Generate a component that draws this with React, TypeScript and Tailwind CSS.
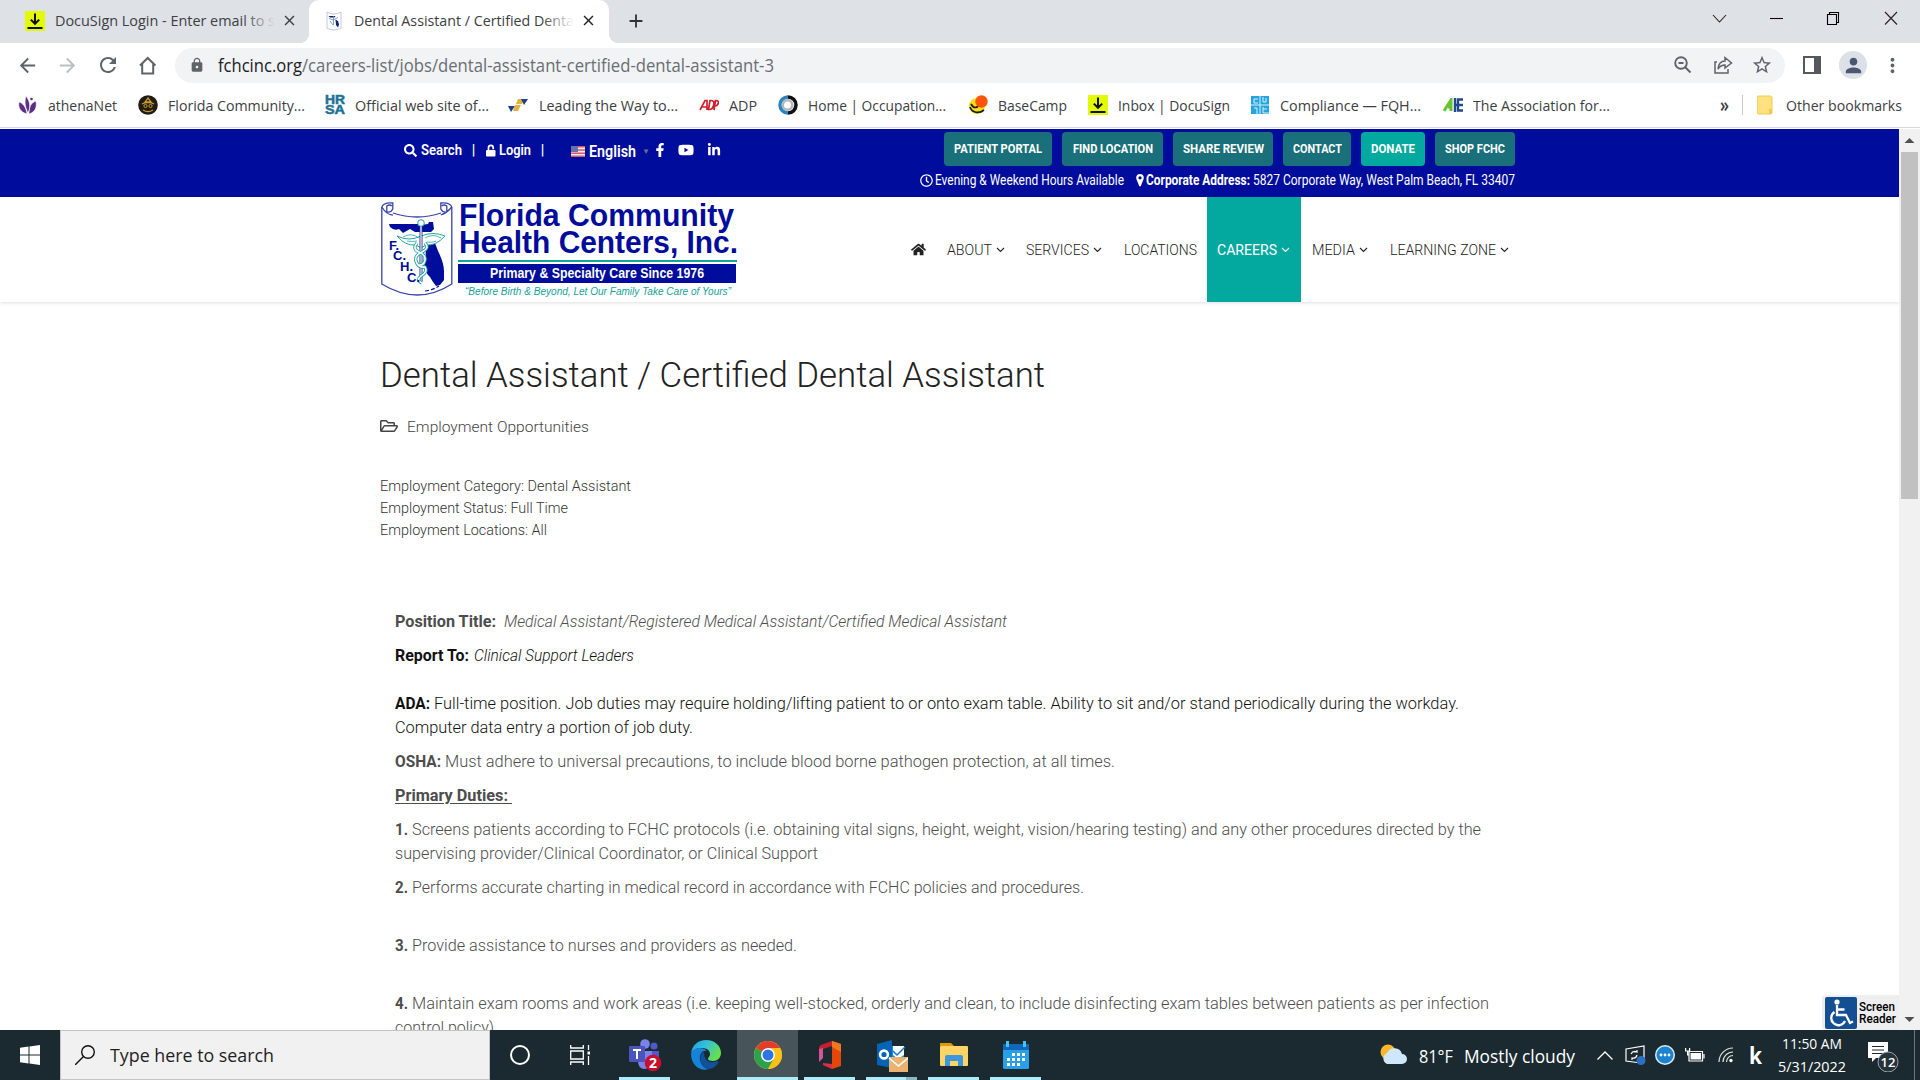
import React, { useLayoutEffect, useRef } from "react";
import {
  FaSearch,
  FaFacebookF,
  FaYoutube,
  FaLinkedinIn,
  FaHome,
  FaRegClock,
  FaRegFolderOpen,
} from "react-icons/fa";
import {
  MdArrowBack,
  MdArrowForward,
  MdRefresh,
  MdLock,
  MdStarBorder,
  MdClose,
  MdAdd,
  MdMoreVert,
  MdPerson,
} from "react-icons/md";

/* A single line of text condensed or widened to fill the width of its box. */
function T({ c = "", children }: { c?: string; children: React.ReactNode }) {
  const box = useRef<HTMLSpanElement>(null);
  const text = useRef<HTMLSpanElement>(null);
  useLayoutEffect(() => {
    const b = box.current;
    const t = text.current;
    if (b && t && t.offsetWidth > 0) {
      t.style.transform = `scaleX(${b.clientWidth / t.getBoundingClientRect().width})`;
    }
  }, []);
  return (
    <span ref={box} className={`block shrink-0 whitespace-pre ${c}`}>
      <span ref={text} className="inline-block origin-left">
        {children}
      </span>
    </span>
  );
}

function DocuSignIcon() {
  return (
    <svg viewBox="0 0 20 20" className="size-5 shrink-0">
      <rect width="20" height="20" fill="#e2fb02" />
      <path d="M10 2.500v10M5.800 8.600l4.200 4.200 4.200-4.200M2.500 17h15" stroke="#101010" strokeWidth="2" fill="none" />
    </svg>
  );
}

function ShieldIcon() {
  return (
    <svg viewBox="0 0 16 20" className="h-5 w-4 shrink-0">
      <path d="M1 1v16.500q7 3 14 0V1q-7 4-14 0z" fill="#fff" stroke="#c3c6ea" strokeWidth="1" />
      <path d="M2.500 5h7l-1 1.500H4z" fill="#141f72" />
      <path d="M9.500 8.500q3 1 3.500 5l-1 3-2-2.500z" fill="#141f72" />
      <path d="M3 7.500l4 1.500 5-2.500M7.500 5v9M4 10l3 4" stroke="#5f8fb8" strokeWidth=".8" fill="none" />
    </svg>
  );
}

function TabStrip() {
  return (
    <div className="flex h-[43px] items-stretch bg-[#dee1e6] text-[15px] text-[#3c4043]">
      <div className="flex w-[309px] items-center pb-[2px] pl-[25px]">
        <DocuSignIcon />
        <div className="relative ml-[10px]">
          <T c="w-[220px]">DocuSign Login - Enter email to s</T>
          <div className="absolute inset-y-0 right-0 w-8 bg-linear-to-r from-transparent to-[#dee1e6]" />
        </div>
        <MdClose className="ml-[6px] size-[17px] text-[#3c4043]" />
      </div>
      <div className="relative flex w-[300px] items-center rounded-t-[10px] bg-white pb-[2px] pl-[17px]">
        <div className="absolute bottom-0 -left-[10px] size-[10px] bg-[radial-gradient(circle_at_0_0,#dee1e6_10px,white_10.5px)]" />
        <div className="absolute -right-[10px] bottom-0 size-[10px] bg-[radial-gradient(circle_at_100%_0,#dee1e6_10px,white_10.5px)]" />
        <ShieldIcon />
        <div className="relative ml-[12px]">
          <T c="w-[220px]">Dental Assistant / Certified Denta</T>
          <div className="absolute inset-y-0 right-0 w-8 bg-linear-to-r from-transparent to-white" />
        </div>
        <MdClose className="ml-[6px] size-[17px] text-[#202124]" />
      </div>
      <div className="flex flex-1 items-center pb-[1px] pl-[16px]">
        <MdAdd className="size-[22px] text-[#303438]" />
      </div>
      <svg viewBox="0 0 220 43" className="h-[43px] w-[220px]" fill="none" stroke="#222" strokeWidth="1.1">
        <path d="M13 15l6.500 7 6.500-7" />
        <path d="M70 18.500h13" stroke="#000" />
        <path d="M127.500 14.500h9v10h-9zM129.500 14.500v-2h9v10h-2" stroke="#000" />
        <path d="M185 12l12 12.500M197 12l-12 12.500" />
      </svg>
    </div>
  );
}

function Toolbar() {
  return (
    <div className="flex h-[44px] items-center bg-white text-[#5f6368]">
      <div className="ml-[16px] flex w-[159px] items-center gap-[17px]">
        <MdArrowBack className="size-[23px]" />
        <MdArrowForward className="size-[23px] text-[#bdbfc2]" />
        <MdRefresh className="size-[24px]" />
        <svg viewBox="0 0 23 23" className="size-[23px]" fill="none" stroke="#5f6368" strokeWidth="2">
          <path d="M3 11.500L10.700 4l7.700 7.500M5.200 10v9.500h11V10" />
        </svg>
      </div>
      <div className="flex h-[35px] w-[1610px] items-center rounded-full bg-[#f1f3f4] text-[18px]">
        <MdLock className="ml-[14px] size-[16px]" />
        <T c="ml-[13px] w-[84px] text-[#202124]">fchcinc.org</T>
        <T c="w-[472px] text-[#6a6e73]">/careers-list/jobs/dental-assistant-certified-dental-assistant-3</T>
        <div className="flex-1" />
        <svg viewBox="0 0 20 20" className="mr-[20px] size-5" fill="none" stroke="#5f6368" strokeWidth="1.900">
          <circle cx="8" cy="8" r="5.800" />
          <path d="M12 12l5.500 5.500M5.500 8h5" />
        </svg>
        <svg viewBox="0 0 20 20" className="mr-[18px] size-5" fill="none" stroke="#5f6368" strokeWidth="1.500">
          <path d="M4 7H2v11h13v-4" />
          <path d="M5 14c.500-5 3-8 7-8V2.500L18.500 8 12 13V10c-3 0-5 1-7 4z" />
        </svg>
        <MdStarBorder className="mr-[12px] size-[22px]" />
      </div>
      <svg viewBox="0 0 18 18" className="ml-[18px] size-[18px]">
        <rect x="1" y="1" width="16" height="16" fill="#fff" stroke="#55595e" strokeWidth="2" />
        <rect x="11" y="1" width="6" height="16" fill="#55595e" />
      </svg>
      <div className="ml-[18px] flex size-[28px] items-center justify-center rounded-full bg-[#dce0e7] text-[#4b5671]">
        <MdPerson className="size-[23px]" />
      </div>
      <MdMoreVert className="ml-[14px] size-[23px]" />
    </div>
  );
}

function Bookmarks() {
  return (
    <div className="flex h-[41px] items-center border-b border-[#d5d7db] bg-white pb-[4px] text-[15px] text-[#3c4043]">
      <svg viewBox="0 0 20 20" className="ml-[18px] size-5" fill="#5c2d82">
        <path d="M9 19C2 17 0 12 1 7c4 1 7 5 8 12zM10 18C6 10 7 5 8 1c4 5 5 11 2 17zM11 19c0-8 2-11 7-13 1 7-1 11-7 13z" stroke="#fff" strokeWidth=".6" />
        <circle cx="13.500" cy="4" r="1.300" />
      </svg>
      <T c="ml-[10px] w-[69px]">athenaNet</T>
      <svg viewBox="0 0 20 20" className="ml-[21px] size-5">
        <circle cx="10" cy="10" r="9.800" fill="#201c15" />
        <path d="M10 3l3 4H7zM4 9c3-2 9-2 12 0M5 15c3 2 7 2 10 0" stroke="#c79b2d" fill="none" strokeWidth="1.300" />
        <circle cx="7.500" cy="11" r="1.600" fill="none" stroke="#c79b2d" />
        <circle cx="12.500" cy="11" r="1.600" fill="none" stroke="#c79b2d" />
      </svg>
      <T c="ml-[10px] w-[137px]">Florida Community...</T>
      <div className="ml-[20px] flex h-5 w-5 flex-col font-['Liberation_Sans'] text-[12px] leading-[10px] font-bold text-[#1c7296]">
        <T c="h-[10px] w-[20px] [-webkit-text-stroke:0.5px_#1c7296]">HR</T>
        <T c="h-[10px] w-[20px] [-webkit-text-stroke:0.5px_#1c7296]">SA</T>
      </div>
      <T c="ml-[10px] w-[134px]">Official web site of...</T>
      <svg viewBox="0 0 20 16" className="ml-[19px] h-4 w-5">
        <path d="M10 2h7l-3 5H8z" fill="#e2b33e" />
        <path d="M0 9h7l-4 6z" fill="#1d3f94" />
        <path d="M7 8h6l-3 6H5z" fill="#e2b33e" />
        <path d="M13 2h7l-4 6z" fill="#1d3f94" />
      </svg>
      <T c="ml-[11px] w-[139px]">Leading the Way to...</T>
      <svg viewBox="0 0 20 12" className="ml-[21px] h-3 w-5" fill="none" stroke="#d0202c" strokeWidth="1.700">
        <path d="M1 11L6 1.500h2V11M3.500 8H8M9.500 10.500l1.500-9h1q4 0 2.500 5-1 4-4 4zM15 11l1.500-9.500h.5q3.500 0 2 3.500-1 2-3 2" />
      </svg>
      <T c="ml-[10px] w-[28px]">ADP</T>
      <svg viewBox="0 0 20 20" className="ml-[21px] size-5" fill="none">
        <path d="M10 2a8 8 0 0 1 0 16" stroke="#111" strokeWidth="3.500" />
        <path d="M10 18a8 8 0 0 1 0-16" stroke="#2b84c2" strokeWidth="3.500" />
        <circle cx="9.500" cy="10" r="4.800" stroke="#b4b8bb" strokeWidth="2.600" />
      </svg>
      <T c="ml-[10px] w-[138px]">Home | Occupation...</T>
      <svg viewBox="0 0 20 20" className="ml-[22px] size-5" fill="none">
        <circle cx="9" cy="11" r="8" fill="#f8dc1b" />
        <path d="M2 12c2 6 9 7 14 3M3 9c3 5 6 4 8 1" stroke="#1b1b1b" strokeWidth="1.700" />
        <circle cx="13.500" cy="6.500" r="6.200" fill="#fb5607" />
      </svg>
      <T c="ml-[10px] w-[69px]">BaseCamp</T>
      <div className="ml-[21px]">
        <DocuSignIcon />
      </div>
      <T c="ml-[10px] w-[112px]">Inbox | DocuSign</T>
      <svg viewBox="0 0 18 18" className="ml-[21px] size-[18px]">
        <rect width="18" height="18" fill="#25a5dc" />
        <path d="M9 0v18M0 9h18M3 3h4M3 3v4h4M12 1v5h3V2M3 12h3v6M12 11v6h6M12 13h4" stroke="#d8f1fb" fill="none" />
      </svg>
      <T c="ml-[11px] w-[141px]">Compliance — FQH...</T>
      <svg viewBox="0 0 20 14" className="ml-[22px] h-[14px] w-5" fill="none" strokeWidth="3">
        <path d="M1 13L8 2v11M5 9h4" stroke="#68c52e" />
        <path d="M12 0v14M12 7h8M20 1.500h-5V12.500h5" stroke="#214a8c" strokeWidth="2.400" />
      </svg>
      <T c="ml-[10px] w-[137px]">The Association for...</T>
      <T c="ml-[110px] w-[9px] text-[19px] font-semibold">»</T>
      <div className="ml-[13px] h-5 w-px bg-[#c9cbce]" />
      <svg viewBox="0 0 16 20" className="ml-[14px] h-5 w-4">
        <rect y="1" width="15" height="18" rx="1.500" fill="#ffe17f" stroke="#f0cb52" />
        <path d="M12 14h3v5h-3z" fill="#f6c944" />
      </svg>
      <T c="ml-[13px] w-[116px]">Other bookmarks</T>
    </div>
  );
}

function TopBar() {
  return (
    <div className="flex h-[68px] justify-between bg-[#000c9c] pr-[384px] pl-[404px] font-[Roboto] text-white">
      <div className="flex h-[42px] items-center text-[14px] font-semibold">
        <FaSearch className="size-[13px]" />
        <T c="ml-[4px] w-[41px]">Search</T>
        <span className="ml-[9px] w-[5px] text-center">|</span>
        <svg viewBox="0 0 11 13" className="ml-[10px] h-[13px] w-[11px]" fill="none">
          <rect y="6" width="9.500" height="6.500" rx="1" fill="#fff" />
          <path d="M2.500 7V3.700a2.300 2.300 0 0 1 4.700 0v1.500" stroke="#fff" strokeWidth="1.700" />
        </svg>
        <T c="ml-[2px] w-[32px]">Login</T>
        <span className="ml-[9px] w-[5px] text-center">|</span>
        <svg viewBox="0 0 14 11" className="mt-[3px] ml-[26px] h-[11px] w-[14px]">
          <rect width="14" height="11" fill="#f5e9ea" />
          <path d="M0 .8h14M0 4h14M0 7.200h14M0 10.300h14" stroke="#d05a66" strokeWidth="1.500" />
          <rect width="7" height="6" fill="#6671ae" />
        </svg>
        <T c="mt-[4px] ml-[4px] w-[47px] text-[16px]">English</T>
        <span className="mt-[3px] ml-[6px] w-[6px] text-[8px] text-[#66718f]">▼</span>
        <FaFacebookF className="ml-[5px] size-[14px]" />
        <FaYoutube className="ml-[11px] size-[16px]" />
        <FaLinkedinIn className="mb-[1px] ml-[13px] size-[14px]" />
      </div>
      <div className="flex flex-col items-end">
        <div className="mt-[3px] flex gap-[10px] text-[12px] font-bold [&>div]:flex [&>div]:h-[34px] [&>div]:items-center [&>div]:justify-center [&>div]:rounded-[4px] [&>div]:bg-[#19707a]">
          <div className="w-[108px]"><T c="w-[88px]">PATIENT PORTAL</T></div>
          <div className="w-[101px]"><T c="w-[80px]">FIND LOCATION</T></div>
          <div className="w-[100px]"><T c="w-[81px]">SHARE REVIEW</T></div>
          <div className="w-[68px]"><T c="w-[49px]">CONTACT</T></div>
          <div className="w-[64px] bg-[#03a89e]!"><T c="w-[44px]">DONATE</T></div>
          <div className="w-[80px]"><T c="w-[60px]">SHOP FCHC</T></div>
        </div>
        <div className="mt-[3px] flex h-[22px] items-center text-[14px]">
          <FaRegClock className="size-[13px]" />
          <T c="ml-[2px] w-[189px]">Evening &amp; Weekend Hours Available</T>
          <svg viewBox="0 0 8 13" className="ml-[12px] h-[13px] w-[8px]">
            <path d="M4 0a3.800 3.800 0 0 1 3.800 3.800C7.800 6 6 8 4.800 12.300H3.200C2 8 .2 6 .2 3.800A3.800 3.800 0 0 1 4 0zM4 2.200a1.600 1.600 0 1 0 0 3.300 1.600 1.600 0 0 0 0-3.300z" fill="#fff" fillRule="evenodd" />
          </svg>
          <T c="ml-[2px] w-[104px] font-bold">Corporate Address:</T>
          <T c="ml-[3px] w-[262px]">5827 Corporate Way, West Palm Beach, FL 33407</T>
        </div>
      </div>
    </div>
  );
}

function Logo() {
  return (
    <div className="flex w-[360px] font-['Liberation_Sans']">
      <svg viewBox="0 0 72 96" className="mt-[4px] ml-[1px] h-[96px] w-[72px]" fill="none">
        <path d="M.8 6v77q36 22 70 0V6" stroke="#3844a8" strokeWidth="1.300" />
        <path d="M.8 6q2-5 11-4v6q-2 4-6 3V5q3-2 5 0M12 12q24 8 48 0M.8 6q5 8 11 8M70.800 6q-2-5-11-4v6q2 4 6 3V5q-3-2-5 0M70.800 6q-5 6-11 8" stroke="#3844a8" strokeWidth="1.300" />
        <path d="M8 23h29l2 1 8-1 1-2h4l1 7-3 3H34l-5-3-7 4-4-4q-5 2-9-2z" fill="#000c9c" />
        <path d="M46 44l8-2 3 8q6 12 6 20v9l-4 5-4 1q-4-5-6-9-5-5-6-10 1-6 2-10-1-6 1-12z" fill="#000c9c" />
        <path d="M16 35q12 6 24 0 12-5 24 0-9 10-19 9l-5 3-5-3Q24 45 16 35z" fill="#fff" stroke="#23a3a3" strokeWidth="1" />
        <path d="M22 36q8-5 16 1M44 37q8-5 16 0M26 40q6 1 10 0M46 41q6 1 9-1" stroke="#23a3a3" strokeWidth=".8" />
        <path d="M40 24v56" stroke="#263294" strokeWidth="3" />
        <path d="M40 24v56" stroke="#fff" strokeWidth="1.200" />
        <circle cx="40" cy="22" r="3.300" fill="#fff" stroke="#23a3a3" />
        <path d="M36 42q-5 6 2 9t6 8q-1 6-7 5M44 42q5 5-3 9t-6 9q2 7 9 6 3 5-4 9-5 4 1 7" stroke="#23a3a3" strokeWidth="3.400" />
        <path d="M36 42q-5 6 2 9t6 8q-1 6-7 5M44 42q5 5-3 9t-6 9q2 7 9 6 3 5-4 9-5 4 1 7" stroke="#fff" strokeWidth="1.600" />
        <path d="M44 90q8-1 14-5" stroke="#000c9c" strokeWidth="1.200" strokeDasharray="4 2" />
        <g fill="#000c9c" fontSize="13" fontWeight="bold" fontFamily="Liberation Sans">
          <text x="8" y="49">F.</text>
          <text x="12" y="59">C.</text>
          <text x="19" y="70">H.</text>
          <text x="26" y="81">C.</text>
        </g>
      </svg>
      <div className="ml-[5px] flex flex-col text-[#000c9c]">
        <T c="mt-[6px] ml-[1px] h-[26px] w-[275px] text-[31px] leading-[26px] font-bold">Florida Community</T>
        <T c="ml-[1px] h-[27px] w-[279px] text-[31px] leading-[27px] font-bold">Health Centers, Inc.</T>
        <div className="mt-[4px] h-[2px] w-[279px] bg-[#13a39b]" />
        <div className="mt-[2px] flex h-[19px] w-[278px] items-center justify-center bg-[#000c9c] text-[15.500px] font-bold text-white">
          <T c="w-[214px] leading-[18px] pb-px">Primary &amp; Specialty Care Since 1976</T>
        </div>
        <T c="mt-px ml-[7px] w-[266px] text-[10.500px] leading-[15px] text-[#13a39b] italic">“Before Birth &amp; Beyond, Let Our Family Take Care of Yours”</T>
      </div>
    </div>
  );
}

function Caret() {
  return (
    <svg viewBox="0 0 9 6" className="ml-[4px] h-[6px] w-[9px]" fill="none" stroke="currentColor" strokeWidth="1.100">
      <path d="M1 1l3.500 3.500L8 1" />
    </svg>
  );
}

function Header() {
  return (
    <div className="relative z-10 flex h-[105px] bg-white pl-[380px] font-[Roboto] shadow-[0_1px_4px_rgba(0,0,0,0.13)]">
      <Logo />
      <div className="ml-[171px] flex items-center text-[15px] font-light text-[#222] [&_span]:pt-px">
        <FaHome className="size-[15px] text-[#222]" />
        <T c="ml-[21px] w-[45px]">ABOUT</T>
        <Caret />
        <T c="ml-[21px] w-[63px]">SERVICES</T>
        <Caret />
        <T c="ml-[22px] w-[73px]">LOCATIONS</T>
        <div className="ml-[10px] flex h-full w-[94px] items-center bg-[#03a89e] pl-[10px] font-normal text-white">
          <T c="w-[60px]">CAREERS</T>
          <Caret />
        </div>
        <T c="ml-[11px] w-[43px]">MEDIA</T>
        <Caret />
        <T c="ml-[22px] w-[106px]">LEARNING ZONE</T>
        <Caret />
      </div>
    </div>
  );
}

function Article() {
  return (
    <div className="flex-1 overflow-hidden bg-white pl-[380px] font-[Roboto] font-light text-[#333]">
      <T c="mt-[50px] w-[665px] text-[35px] leading-[48px] text-[#222]">Dental Assistant / Certified Dental Assistant</T>
      <div className="mt-[16px] flex h-[22px] items-center text-[15px] text-[#444]">
        <FaRegFolderOpen className="mb-[2px] h-[16px] w-[18px]" />
        <T c="ml-[9px] w-[182px]">Employment Opportunities</T>
      </div>
      <div className="mt-[38px] text-[15px]">
        <T c="h-[21px] w-[251px] leading-[21px]">Employment Category: Dental Assistant</T>
        <T c="h-[22px] w-[188px] leading-[22px]">Employment Status: Full Time</T>
        <T c="h-[22px] w-[167px] leading-[22px]">Employment Locations: All</T>
      </div>
      <div className="mt-[69px] pl-[14.500px] text-[16px] leading-6 text-[#4d4d4d] [&>div]:flex">
        <div>
          <T c="w-[101px] font-bold">Position Title:</T>
          <T c="ml-[8px] w-[503px] italic">Medical Assistant/Registered Medical Assistant/Certified Medical Assistant</T>
        </div>
        <div className="mt-[10px] text-[#111]">
          <T c="w-[74px] font-bold">Report To:</T>
          <T c="ml-[5px] w-[160px] italic">Clinical Support Leaders</T>
        </div>
        <div className="mt-6 text-[#111]">
          <T c="w-[35px] font-bold">ADA:</T>
          <T c="ml-[4px] w-[1025px]">Full-time position. Job duties may require holding/lifting patient to or onto exam table. Ability to sit and/or stand periodically during the workday.</T>
        </div>
        <T c="w-[298px] text-[#111]">Computer data entry a portion of job duty.</T>
        <div className="mt-[10px]">
          <T c="w-[46px] font-bold">OSHA:</T>
          <T c="ml-[4px] w-[670px]">Must adhere to universal precautions, to include blood borne pathogen protection, at all times.</T>
        </div>
        <T c="mt-[10px] w-[117px] font-bold [&>span]:underline [&>span]:underline-offset-2">{"Primary Duties: "}</T>
        <div className="mt-[10px]">
          <T c="w-[13px] font-bold">1.</T>
          <T c="ml-[4px] w-[1069px]">Screens patients according to FCHC protocols (i.e. obtaining vital signs, height, weight, vision/hearing testing) and any other procedures directed by the</T>
        </div>
        <T c="w-[423px]">supervising provider/Clinical Coordinator, or Clinical Support</T>
        <div className="mt-[10px]">
          <T c="w-[13px] font-bold">2.</T>
          <T c="ml-[4px] w-[672px]">Performs accurate charting in medical record in accordance with FCHC policies and procedures.</T>
        </div>
        <div className="mt-[34px]">
          <T c="w-[13px] font-bold">3.</T>
          <T c="ml-[4px] w-[385px]">Provide assistance to nurses and providers as needed.</T>
        </div>
        <div className="mt-[34px]">
          <T c="w-[13px] font-bold">4.</T>
          <T c="ml-[4px] w-[1077px]">Maintain exam rooms and work areas (i.e. keeping well-stocked, orderly and clean, to include disinfecting exam tables between patients as per infection</T>
        </div>
        <T c="w-[99px]">control policy)</T>
      </div>
    </div>
  );
}

function ScreenReader() {
  return (
    <div className="absolute right-0 bottom-0 z-20 flex h-[35px] w-[77px] items-center rounded-l-[4px] bg-[#eee] pl-[3px] font-[Roboto] text-[12px] leading-[12px] font-medium text-black">
      <svg viewBox="0 0 32 32" className="size-8" fill="none">
        <rect width="32" height="32" rx="2" fill="#144f94" />
        <circle cx="12" cy="5" r="2.600" fill="#fff" />
        <path d="M12 8v10h9l4 8 3-1.500M12.500 12.500h7M9.500 15a7.200 7.200 0 1 0 10.500 9" stroke="#fff" strokeWidth="2.300" />
      </svg>
      <div className="ml-[2px] flex flex-col">
        <T c="w-[36px]">Screen</T>
        <T c="w-[37px]">Reader</T>
      </div>
    </div>
  );
}

function Scrollbar() {
  return (
    <div className="flex w-[21px] flex-col items-center justify-between bg-[#f1f1f1] text-[#505050]">
      <svg viewBox="0 0 21 23" className="h-[23px] w-[21px] shrink-0">
        <path d="M5.500 14l5-5 5 5z" fill="currentColor" />
      </svg>
      <div className="h-[347px] w-[17px] bg-[#c1c1c1]" />
      <div className="flex-1" />
      <svg viewBox="0 0 21 21" className="h-[21px] w-[21px] shrink-0">
        <path d="M5.500 8l5 5 5-5z" fill="currentColor" />
      </svg>
    </div>
  );
}

function Slot({ c, bar = "bg-[#a9ecfa]", children }: { c: string; bar?: string; children: React.ReactNode }) {
  return (
    <div className={`flex h-[50px] shrink-0 flex-col items-center ${c}`}>
      <div className="flex h-[47px] items-center pt-[3px]">{children}</div>
      <div className={`h-[3px] w-full ${bar}`} />
    </div>
  );
}

function TaskIcons() {
  return (
    <>
      <div className="ml-[20px] size-[20px] rounded-full border-[2.500px] border-white" />
      <svg viewBox="0 0 21 20" className="ml-[40px] h-5 w-[21px]" fill="none" stroke="#fff" strokeWidth="1.300">
        <path d="M.7 0v3h12.600V0M.7 20v-3h12.600V20M.7 6h12.600v8H.7zM18.500 0v5M18.500 11v9" />
        <rect x="17.500" y="6.500" width="2.500" height="3" fill="#fff" stroke="none" />
      </svg>
      <Slot c="ml-[28px] w-[51px]">
        <svg viewBox="0 0 34 34" className="size-[34px]">
          <circle cx="17" cy="6" r="4.800" fill="#7b83eb" />
          <circle cx="26" cy="8" r="3.500" fill="#5059c9" />
          <path d="M22 13h9v9q-1 5-6 5z" fill="#5059c9" />
          <path d="M10 13h14v10q-1 8-8 8-6-1-6-8z" fill="#7b83eb" />
          <rect x="1" y="8" width="16" height="16" rx="1" fill="#4b53bc" />
          <path d="M5 12h8M9 12v9" stroke="#fff" strokeWidth="2" />
          <circle cx="25" cy="25" r="8.300" fill="#c8102e" />
          <text x="25" y="30" fontSize="14" fontWeight="bold" textAnchor="middle" fill="#fff">2</text>
        </svg>
      </Slot>
      <svg viewBox="0 0 30 30" className="ml-[21px] size-[30px]">
        <defs>
          <linearGradient id="edgeTop" x1="0" y1="0" x2="1" y2=".5">
            <stop offset="0" stopColor="#1a9fe0" />
            <stop offset=".5" stopColor="#35c1d8" />
            <stop offset="1" stopColor="#66e04f" />
          </linearGradient>
        </defs>
        <path d="M0 14C1 5 7 0 15 0c9 0 15 6 15 13 0 5-4 8-8 8-3 0-5-1-5-2 0-2 2-2 2-5 0-4-4-6-8-6C6 8 1 10 0 14z" fill="url(#edgeTop)" />
        <path d="M0 14c1-4 5-6 9-6 3 0 5 1 7 3-5-1-8 4-7 9s5 9 9 9c-9 3-18-4-18-15z" fill="#1583d8" />
        <path d="M13 12c-5 2-5 9 0 13 5 3 10 1 13-2 2-1 1-2 0-2-7 3-13 0-13-9z" fill="#10509c" />
        <path d="M9 20c1 6 6 9 10 9 4-1 7-4 9-7-7 4-13 2-15-3z" fill="#12519b" />
      </svg>
      <Slot c="ml-[16px] w-[61px] bg-[#475459]">
        <svg viewBox="0 0 28 28" className="size-7">
          <circle cx="14" cy="14" r="14" fill="#fbc116" />
          <path d="M14 14L1.900 7A14 14 0 0 1 26.100 7z" fill="#e33b2e" />
          <path d="M14 14L1.900 7A14 14 0 0 0 14 28l6-10.500z" fill="#2da24c" />
          <path d="M14 7h12.100a14 14 0 0 1-12.100 21l6-10.500z" fill="#fbc116" />
          <circle cx="14" cy="14" r="7" fill="#fff" />
          <circle cx="14" cy="14" r="5.500" fill="#3075e8" />
        </svg>
      </Slot>
      <Slot c="ml-[6px] w-[51px]">
        <svg viewBox="0 0 24 28" className="h-7 w-6">
          <path d="M14 0L3 4q-2 1-2 3v12l4-2V8l9-3z" fill="#c62030" />
          <path d="M5 7v10l-4 4V8z" fill="#d45593" />
          <path d="M14 0l9 3v22l-9 3z" fill="#e54609" />
          <path d="M14 0l9 3v8L14 6z" fill="#f17720" />
          <path d="M5 22l9 1v5l-9-4z" fill="#e02c4a" />
        </svg>
      </Slot>
      <Slot c="ml-[11px] w-[51px]" bar="bg-[linear-gradient(to_right,#a9ecfa_40px,#8ab8c1_40px)]">
        <svg viewBox="0 0 32 34" className="h-[34px] w-8">
          <path d="M14 8h14v15H14z" fill="#1490df" />
          <path d="M17 8h11v9l-6 4-5-4z" fill="#fff" />
          <path d="M17 13l4 4 8-8" fill="none" stroke="#0f78d4" strokeWidth="1.500" />
          <path d="M1 6l15-4v28L1 27z" fill="#0364b8" />
          <circle cx="8" cy="16.500" r="3.900" fill="none" stroke="#fff" strokeWidth="2.600" />
          <path d="M13 19h19v15H13z" fill="#ebb372" />
          <path d="M13 20l9.500 8L32 20" stroke="#fff" strokeWidth="1.500" fill="none" />
        </svg>
      </Slot>
      <Slot c="ml-[11px] w-[51px]">
        <svg viewBox="0 0 28 24" className="h-6 w-7">
          <path d="M0 0h11l3 3H0z" fill="#e09a08" />
          <rect y="3" width="28" height="20" rx="1" fill="#ffd464" />
          <path d="M5 23v-9q0-2 2-2h14q2 0 2 2v9h-5v-5h-8v5z" fill="#3d97dc" />
        </svg>
      </Slot>
      <Slot c="ml-[11px] w-[51px]">
        <svg viewBox="0 0 26 28" className="h-7 w-[26px]">
          <rect y="3" width="26" height="25" rx="1.500" fill="#28a0e8" />
          <path d="M0 3h26v6H0z" fill="#1268b8" />
          <path d="M3 0h3v6H3zM20 0h3v6h-3z" fill="#42c8ee" />
          <path d="M9 12h3v3H9zM14 12h3v3h-3zM19 12h3v3h-3zM4 17h3v3H4zM9 17h3v3H9zM14 17h3v3h-3zM19 17h3v3h-3zM4 22h3v3H4zM9 22h3v3H9zM14 22h3v3h-3z" fill="#fff" />
        </svg>
      </Slot>
    </>
  );
}

function Tray() {
  return (
    <div className="ml-auto flex items-center text-white">
      <svg viewBox="0 0 28 24" className="h-6 w-7">
        <circle cx="8" cy="9" r="7.500" fill="#f9b62b" />
        <path d="M7 21a6 6 0 0 1 0-11 8 8 0 0 1 15 1 5 5 0 0 1 0 10z" fill="#cfe7fb" />
      </svg>
      <T c="ml-[11px] w-[34px] pt-[2px] text-[18px]">81°F</T>
      <T c="ml-[11px] w-[111px] pt-[2px] text-[18px]">Mostly cloudy</T>
      <svg viewBox="0 0 16 9" className="ml-[22px] h-[9px] w-4" fill="none" stroke="#fff" strokeWidth="1.300">
        <path d="M.5 8.500L8 1l7.500 7.500" />
      </svg>
      <svg viewBox="0 0 21 20" className="ml-[12px] h-5 w-[21px]" fill="none" stroke="#fff" strokeWidth="1.200">
        <path d="M1 4l18-3v16l-3 1L1 16zM6 9q2-4 6-2V5M12 7h-3M12 10q-1 4-5 3v2M7 13h3" />
        <circle cx="16" cy="15.500" r="4.500" fill="#2d6fc0" stroke="none" />
      </svg>
      <svg viewBox="0 0 20 20" className="ml-[9px] size-5">
        <circle cx="10" cy="10" r="10" fill="#d9eefb" />
        <circle cx="10" cy="10" r="8.500" fill="#1d82cf" />
        <circle cx="6" cy="10" r="1.400" fill="#fff" />
        <circle cx="10" cy="10" r="1.400" fill="#fff" />
        <circle cx="14" cy="10" r="1.400" fill="#fff" />
      </svg>
      <svg viewBox="0 0 20 15" className="ml-[10px] h-[15px] w-5" fill="none" stroke="#fff" strokeWidth="1.200">
        <path d="M4 3.500h13.500v9.500H4zM19 6v4.500M.6 0v3h4V0M2.600 3v4H4" />
        <rect x="5.500" y="5" width="10.500" height="6.500" fill="#fff" stroke="none" />
      </svg>
      <svg viewBox="0 0 16 16" className="ml-[13px] size-4" fill="none" stroke="#fff" strokeWidth="1.200">
        <path d="M1 15A14 14 0 0 1 15 1M5 15A10 10 0 0 1 15 5M8.500 15A6.500 6.500 0 0 1 15 8.500" opacity=".85" />
        <circle cx="13" cy="13.500" r="1.700" fill="#fff" stroke="none" />
      </svg>
      <T c="ml-[15px] w-[13px] text-[24px] leading-6 font-bold">k</T>
      <div className="ml-[16px] flex w-[68px] flex-col items-center text-[14.500px] leading-[23px]">
        <T c="w-[60px]">11:50 AM</T>
        <T c="w-[68px]">5/31/2022</T>
      </div>
      <svg viewBox="0 0 34 34" className="ml-[21px] size-[34px]">
        <path d="M1 4h20v16H9l-4 4v-4H1z" fill="#fff" />
        <path d="M5 8.500h12M5 12h12M5 15.500h12" stroke="#1b2a30" strokeWidth="1.200" />
        <circle cx="21" cy="24" r="10" fill="#26333a" stroke="#9aa3a7" />
        <text x="21" y="29" fontSize="13" fontWeight="600" textAnchor="middle" fill="#fff">12</text>
      </svg>
      <div className="ml-[13px] h-[50px] w-px bg-[#6d777b]" />
      <div className="w-[5px]" />
    </div>
  );
}

export default function App() {
  return (
    <div className="flex h-[1080px] w-[1920px] flex-col overflow-hidden bg-white font-['Open_Sans']">
      <TabStrip />
      <Toolbar />
      <Bookmarks />
      <div className="mt-px flex h-[901px] w-full">
        <div className="relative flex w-[1899px] flex-col overflow-hidden">
          <TopBar />
          <Header />
          <Article />
          <ScreenReader />
        </div>
        <Scrollbar />
      </div>
      <div className="flex h-[50px] items-center bg-[#1b2a30]">
        <div className="flex w-[60px] justify-center">
          <svg viewBox="0 0 20 20" className="size-5" fill="#fff">
            <path d="M0 2.800L8.500 1.600V9.500H0zM9.500 1.500L20 0v9.500H9.500zM0 10.500h8.500v8L0 17.200zM9.500 10.500H20V20L9.500 18.500z" />
          </svg>
        </div>
        <div className="flex h-full w-[430px] items-center border border-[#c4c4c4] bg-[#f1f1f1] text-[18px] text-[#1f1f1f]">
          <svg viewBox="0 0 20 20" className="ml-[14px] size-5" fill="none" stroke="#111" strokeWidth="1.400">
            <circle cx="13" cy="7" r="6.300" />
            <path d="M8.500 11.500L0 20" />
          </svg>
          <T c="ml-[15px] w-[164px]">Type here to search</T>
        </div>
        <TaskIcons />
        <Tray />
      </div>
    </div>
  );
}
